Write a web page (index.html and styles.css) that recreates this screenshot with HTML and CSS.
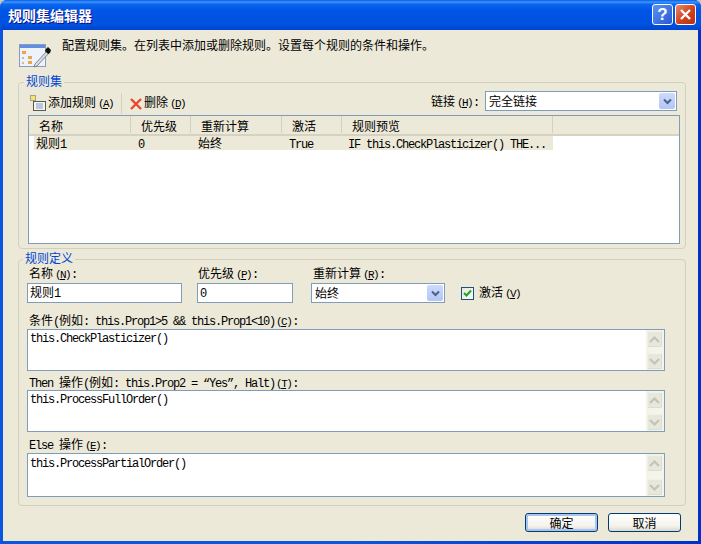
FILE: index.html
```html
<!DOCTYPE html>
<html lang="zh-CN">
<head>
<meta charset="utf-8">
<title>规则集编辑器</title>
<link rel="stylesheet" href="styles.css">
</head>
<body>
<div class="window">
  <header class="titlebar">
    <h1 class="title">规则集编辑器</h1>
    <div class="tb-btn help">?</div>
    <div class="tb-btn close">
      <svg width="13" height="13" viewBox="0 0 13 13"><path d="M2 2l9 9M11 2l-9 9" stroke="#fff" stroke-width="2.4" fill="none"/></svg>
    </div>
  </header>
  <main class="client">
    <div class="intro">
      <svg class="intro-icon" width="32" height="24" viewBox="0 0 32 24">
        <rect x="0.5" y="0.5" width="26" height="22" fill="#eef2fa" stroke="#8a9bbd"/>
        <rect x="1" y="1" width="25" height="3" fill="#5f8fe0"/>
        <rect x="3" y="7" width="4" height="3" fill="#eaa64a"/>
        <rect x="9" y="12" width="4" height="3" fill="#eaa64a"/>
        <rect x="9" y="17" width="4" height="3" fill="#eaa64a"/>
        <rect x="3" y="13" width="2" height="2" fill="#c9b9a0"/>
        <rect x="3" y="18" width="2" height="2" fill="#c9b9a0"/>
        <path d="M16 20l12-13 2 2-12 13-3 1z" fill="#d9dde3" stroke="#6b7077" stroke-width="0.8"/>
        <path d="M27 5l2-2 3 3-1 3-2 1-3-3z" fill="#111"/>
      </svg>
      <p class="intro-text">配置规则集。在列表中添加或删除规则。设置每个规则的条件和操作。</p>
    </div>

    <fieldset class="group group-set">
      <legend class="legend">规则集</legend>
      <div class="toolbar">
        <svg class="add-icon" width="16" height="16" viewBox="0 0 16 16">
          <rect x="3.5" y="6.5" width="12" height="9" fill="#f4f4f0" stroke="#5c5a50"/>
          <path d="M6 9h7M6 11h7M6 13h7" stroke="#7d9ccc"/>
          <rect x="0.5" y="0.5" width="5" height="5" fill="#f7e36a" stroke="#a8a48c"/>
        </svg>
        <span class="tool-text">添加规则<span class="mn">(<u>A</u>)</span></span>
        <span class="sep"></span>
        <svg class="del-icon" width="12" height="12" viewBox="0 0 12 12"><path d="M1 1l10 10M11 1L1 11" stroke="#e8492c" stroke-width="2.4" fill="none"/></svg>
        <span class="tool-text">删除<span class="mn">(<u>D</u>)</span></span>
        <span class="link-label">链接<span class="mn">(<u>H</u>)</span><span class="m">:</span></span>
        <div class="combo combo-link">
          <span class="combo-text">完全链接</span>
          <span class="combo-btn"><svg width="9" height="7" viewBox="0 0 9 7"><path d="M1 1.5l3.5 3.5L8 1.5" stroke="#4d6185" stroke-width="2" fill="none"/></svg></span>
        </div>
      </div>
      <div class="list">
        <div class="list-head">
          <div class="hc h1">名称</div>
          <div class="hc h2">优先级</div>
          <div class="hc h3">重新计算</div>
          <div class="hc h4">激活</div>
          <div class="hc h5">规则预览</div>
          <div class="hc h6"></div>
        </div>
        <div class="list-row">
          <div class="rc r1">规则<span class="m">1</span></div>
          <div class="rc r2"><span class="m">0</span></div>
          <div class="rc r3">始终</div>
          <div class="rc r4"><span class="m">True</span></div>
          <div class="rc r5"><span class="m">IF this.CheckPlasticizer() THE...</span></div>
        </div>
      </div>
    </fieldset>

    <fieldset class="group group-def">
      <legend class="legend legend-def">规则定义</legend>
      <div class="fields">
        <div class="field f-name">
          <label class="lbl pad2">名称<span class="mn">(<u>N</u>)</span><span class="m">:</span></label>
          <div class="input">规则<span class="m">1</span></div>
        </div>
        <div class="field f-prio">
          <label class="lbl pad1">优先级<span class="mn">(<u>P</u>)</span><span class="m">:</span></label>
          <div class="input"><span class="m">0</span></div>
        </div>
        <div class="field f-re">
          <label class="lbl pad2">重新计算<span class="mn">(<u>R</u>)</span><span class="m">:</span></label>
          <div class="combo combo-re">
            <span class="combo-text">始终</span>
            <span class="combo-btn"><svg width="9" height="7" viewBox="0 0 9 7"><path d="M1 1.5l3.5 3.5L8 1.5" stroke="#4d6185" stroke-width="2" fill="none"/></svg></span>
          </div>
        </div>
        <div class="check-wrap">
          <span class="check"><svg width="9" height="8" viewBox="0 0 9 8"><path d="M1 4l2.5 2.5L8 1.5" stroke="#21a121" stroke-width="2" fill="none"/></svg></span>
          <span class="check-label">激活<span class="mn">(<u>V</u>)</span></span>
        </div>
      </div>

      <div class="block b-cond">
        <div class="lbl pad2">条件<span class="m">(</span>例如<span class="m">: this.Prop1&gt;5 &amp;&amp; this.Prop1&lt;10)</span><span class="mn mn0">(<u>C</u>)</span><span class="m">:</span></div>
        <div class="area a-cond">
          <div class="area-text"><span class="m">this.CheckPlasticizer()</span></div>
          <div class="scroll">
            <span class="sb"><svg width="11" height="7" viewBox="0 0 11 7"><path d="M1 6l4.5-4.5L10 6" stroke="#c4c3b8" stroke-width="2.2" fill="none"/></svg></span>
            <span class="sb"><svg width="11" height="7" viewBox="0 0 11 7"><path d="M1 1l4.5 4.5L10 1" stroke="#c4c3b8" stroke-width="2.2" fill="none"/></svg></span>
          </div>
        </div>
      </div>

      <div class="block b-then">
        <div class="lbl pad2"><span class="m">Then </span>操作<span class="m">(</span>例如<span class="m">: this.Prop2 = “Yes”, Halt)</span><span class="mn mn0">(<u>T</u>)</span><span class="m">:</span></div>
        <div class="area a-then">
          <div class="area-text"><span class="m">this.ProcessFullOrder()</span></div>
          <div class="scroll">
            <span class="sb"><svg width="11" height="7" viewBox="0 0 11 7"><path d="M1 6l4.5-4.5L10 6" stroke="#c4c3b8" stroke-width="2.2" fill="none"/></svg></span>
            <span class="sb"><svg width="11" height="7" viewBox="0 0 11 7"><path d="M1 1l4.5 4.5L10 1" stroke="#c4c3b8" stroke-width="2.2" fill="none"/></svg></span>
          </div>
        </div>
      </div>

      <div class="block b-else">
        <div class="lbl pad2"><span class="m">Else </span>操作<span class="mn">(<u>E</u>)</span><span class="m">:</span></div>
        <div class="area a-else">
          <div class="area-text"><span class="m">this.ProcessPartialOrder()</span></div>
          <div class="scroll">
            <span class="sb"><svg width="11" height="7" viewBox="0 0 11 7"><path d="M1 6l4.5-4.5L10 6" stroke="#c4c3b8" stroke-width="2.2" fill="none"/></svg></span>
            <span class="sb"><svg width="11" height="7" viewBox="0 0 11 7"><path d="M1 1l4.5 4.5L10 1" stroke="#c4c3b8" stroke-width="2.2" fill="none"/></svg></span>
          </div>
        </div>
      </div>
    </fieldset>

    <div class="actions">
      <button class="btn btn-default">确定</button>
      <button class="btn">取消</button>
    </div>
  </main>
</div>
</body>
</html>
```
FILE: styles.css
```css
* { box-sizing: border-box; }
html, body { margin: 0; padding: 0; height: 100%; }
body {
  background: #c8c8c0;
  font: 12px/14px "Noto Sans CJK SC", "Liberation Sans", sans-serif;
  color: #000;
  overflow: hidden;
}
.m {
  font-family: "Liberation Mono", "Noto Sans CJK SC", monospace;
  font-size: 12px;
  letter-spacing: -1.2px;
  white-space: pre;
}
.mn {
  font-family: "Liberation Mono", monospace;
  font-size: 11px;
  letter-spacing: -1.6px;
  margin-left: 2px;
  margin-right: 1px;
}
.mn0 { margin-left: 1px; }

.window {
  width: 701px;
  height: 544px;
  display: flex;
  flex-direction: column;
  background: linear-gradient(90deg, #0a56e0 0, #0a56e0 50%, #0030c8 100%);
  border-radius: 7px 7px 0 0;
  overflow: hidden;
}
.titlebar {
  height: 30px;
  flex: none;
  display: flex;
  align-items: center;
  gap: 2px;
  padding: 0 5px 1px 8px;
  background: linear-gradient(#0a5be6 0, #3d95ff 7%, #0a66ee 14%, #0055e5 35%, #0052e0 80%, #0044d0 100%);
}
.title {
  flex: 1;
  margin: 0;
  font-size: 14px;
  font-weight: 700;
  line-height: 18px;
  color: #fff;
  text-shadow: 1px 1px 0 #0f1089;
}
.tb-btn {
  width: 21px;
  height: 21px;
  border: 1px solid #fff;
  border-radius: 3px;
  display: flex;
  align-items: center;
  justify-content: center;
  color: #fff;
  font: 700 17px/19px "Liberation Sans", sans-serif;
}
.help { background: linear-gradient(135deg, #5a94f5, #2a58d2); }
.close { background: linear-gradient(135deg, #ea8a6c, #d0401c 55%, #b83212); }

.client {
  flex: 1;
  margin: 0 3px 3px 3px;
  padding: 8px 12px 0 15px;
  background: #ece9d8;
  display: flex;
  flex-direction: column;
}
.intro {
  height: 36px;
  flex: none;
  display: flex;
  padding-left: 1px;
}
.intro-icon { margin-top: 6px; flex: none; }
.intro-text { margin: 0 0 0 11px; line-height: 14px; }

.group {
  margin: 0;
  padding: 0;
  min-width: 0;
  border: 1px solid #d0d0bf;
  border-radius: 4px;
  width: 668px;
}
.legend {
  margin-left: -4px;
  padding: 0 2px 3px;
  line-height: 14px;
  color: #0046d5;
}
.group-set { height: 175px; flex: none; padding: 0 5px 0 9px; }
.group-def { height: 255px; flex: none; margin-top: 2px; padding: 0 0 0 8px; }

.toolbar { height: 24px; display: flex; align-items: center; }
.add-icon { margin-left: 2px; flex: none; }
.tool-text { margin-left: 2px; }
.sep { width: 1px; height: 21px; margin: 0 8px 0 7px; background: #d3d0be; }
.del-icon { flex: none; margin-top: 2px; }
.link-label { margin-left: auto; margin-right: 6px; margin-bottom: 3px; }

.combo {
  height: 20px;
  border: 1px solid #7f9db9;
  background: #fff;
  display: flex;
  align-items: center;
  justify-content: space-between;
  padding: 0 1px 0 3px;
}
.combo-link { width: 192px; margin-right: 3px; margin-bottom: 4px; }
.combo-re { width: 134px; }
.combo-btn {
  width: 16px;
  height: 16px;
  border-radius: 2px;
  background: linear-gradient(#cddafc, #b2c6f5);
  display: flex;
  align-items: center;
  justify-content: center;
}

.list {
  width: 652px;
  height: 129px;
  border: 1px solid #7f9db9;
  background: #fff;
}
.list-head {
  height: 20px;
  display: grid;
  grid-template-columns: 102px 60px 91px 60px 211px 1fr;
  background: #ece9d8;
  border-bottom: 2px solid #d6d2c2;
}
.hc {
  padding: 3px 0 0 10px;
  border-right: 1px solid #d3d0be;
  margin-bottom: 3px;
}
.h6 { border-right: 0; }
.list-row {
  width: 519px;
  height: 14px;
  margin-left: 5px;
  display: grid;
  grid-template-columns: 97px 60px 91px 60px 211px;
  background: #ece9d8;
}
.rc { padding-left: 7px; white-space: nowrap; }
.r1 { padding-left: 2px; }
.r5 { padding-left: 6px; }

.fields { display: flex; align-items: flex-end; margin-top: -2px; }
.field { display: flex; flex-direction: column; gap: 3px; }
.f-name { width: 155px; }
.f-prio { width: 96px; margin-left: 15px; }
.f-re { width: 134px; margin-left: 18px; }
.lbl { height: 14px; white-space: nowrap; }
.pad1 { padding-left: 1px; }
.pad2 { padding-left: 2px; }
.input {
  height: 20px;
  border: 1px solid #7f9db9;
  background: #fff;
  padding: 1px 0 0 2px;
}
.check-wrap { height: 20px; margin-left: 16px; display: flex; align-items: center; }
.check {
  width: 13px;
  height: 13px;
  border: 1px solid #1c5180;
  background: linear-gradient(135deg, #e6e6dc, #fbfbf8);
  display: flex;
  align-items: center;
  justify-content: center;
}
.check-label { margin-left: 5px; }

.block { display: flex; flex-direction: column; width: 638px; }
.b-cond { margin-top: 10px; gap: 2px; }
.b-then { margin-top: 4px; gap: 1px; }
.b-else { margin-top: 5px; gap: 2px; }
.area {
  border: 1px solid #7f9db9;
  background: #fff;
  display: flex;
  justify-content: space-between;
}
.a-cond, .a-then { height: 42px; }
.a-else { height: 44px; }
.area-text { padding: 0 0 0 2px; }
.a-else .area-text { padding-top: 1px; }
.scroll {
  width: 18px;
  padding: 1px 2px 1px 1px;
  display: flex;
  flex-direction: column;
  justify-content: space-between;
  background: #f5f4ea;
}
.sb {
  height: 16px;
  border-radius: 2px;
  border: 1px solid #f2f1e7;
  border-right-color: #dddcd0;
  border-bottom-color: #dddcd0;
  background: #e8e7db;
  display: flex;
  align-items: center;
  justify-content: center;
}

.actions {
  width: 663px;
  margin-top: 7px;
  display: flex;
  justify-content: flex-end;
  gap: 10px;
}
.btn {
  width: 73px;
  height: 19px;
  padding: 0;
  border: 1px solid #003c74;
  border-radius: 3px;
  background: linear-gradient(#ffffff, #f4f3ec 70%, #dcd9cc);
  font: inherit;
  color: #000;
}
.btn-default { box-shadow: inset 0 0 0 2px #a9c4ef; }
```
